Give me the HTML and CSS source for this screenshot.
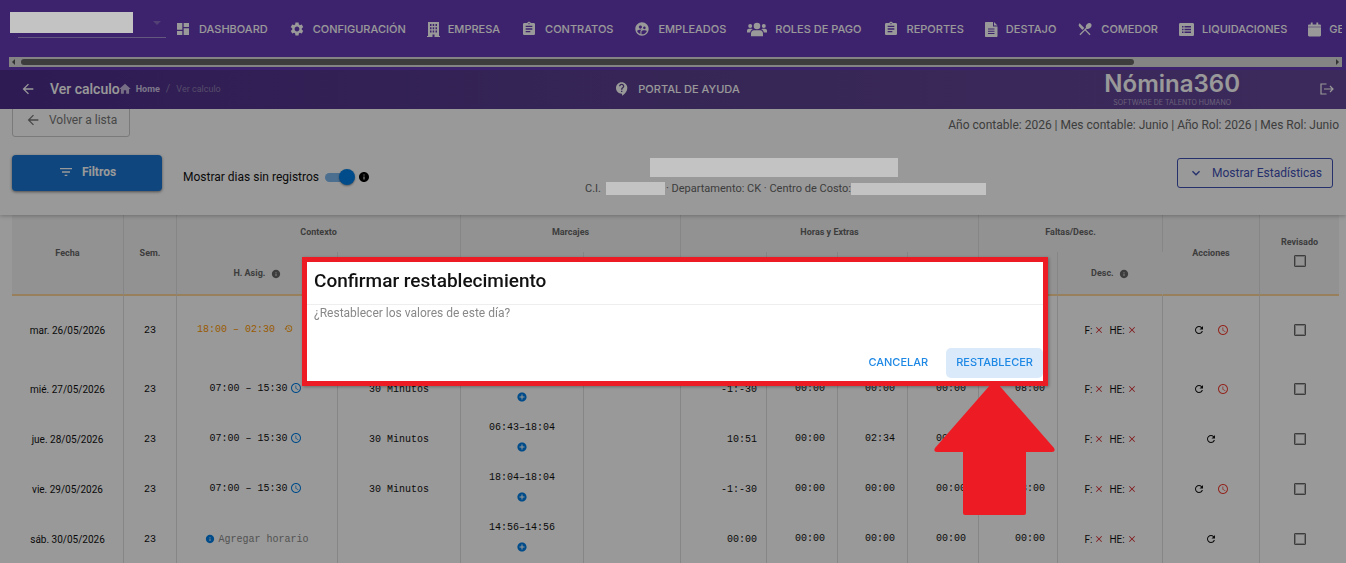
FILE: index.html
```html
<!DOCTYPE html>
<html lang="es">
<head>
    <meta charset="UTF-8">
    <meta name="viewport" content="width=device-width, initial-scale=1.0">
    <title>Ver calculo</title>
    <link rel="stylesheet" href="styles.css">
</head>
<body>
    <svg class="sprite" aria-hidden="true">
        <symbol id="i-dashboard" viewBox="0 0 24 24"><path d="M3 13h8V3H3v10zm0 8h8v-6H3v6zm10 0h8V11h-8v10zm0-18v6h8V3h-8z"/></symbol>
        <symbol id="i-settings" viewBox="0 0 24 24"><path d="M19.14 12.94c.04-.3.06-.61.06-.94 0-.32-.02-.64-.07-.94l2.03-1.58c.18-.14.23-.41.12-.61l-1.92-3.32c-.12-.22-.37-.29-.59-.22l-2.39.96c-.5-.38-1.03-.7-1.62-.94L14.4 2.81c-.04-.24-.24-.41-.48-.41h-3.84c-.24 0-.43.17-.47.41L9.25 5.35C8.66 5.59 8.12 5.92 7.63 6.29L5.24 5.33c-.22-.08-.47 0-.59.22L2.74 8.87c-.12.21-.08.47.12.61l2.03 1.58c-.05.3-.09.63-.09.94s.02.64.07.94l-2.03 1.58c-.18.14-.23.41-.12.61l1.92 3.32c.12.22.37.29.59.22l2.39-.96c.5.38 1.03.7 1.62.94l.36 2.54c.05.24.24.41.48.41h3.84c.24 0 .44-.17.47-.41l.36-2.54c.59-.24 1.13-.56 1.62-.94l2.39.96c.22.08.47 0 .59-.22l1.92-3.32c.12-.22.07-.47-.12-.61l-2.01-1.58zM12 15.6c-1.98 0-3.6-1.62-3.6-3.6s1.62-3.6 3.6-3.6 3.6 1.62 3.6 3.6-1.62 3.6-3.6 3.6z"/></symbol>
        <symbol id="i-building" viewBox="0 0 13 15"><path fill-rule="evenodd" d="M1 0h11v14h1v1H7.500v-2.500h-2V15H0v-1h1zM3 2v2h1.500V2zm2.700 0v2h1.500V2zm2.800 0v2H10V2zM3 5.200v2h1.500v-2zm2.700 0v2h1.500v-2zm2.800 0v2H10v-2zM3 8.500v2h1.500v-2zm2.700 0v2h1.500v-2zm2.800 0v2H10v-2z"/></symbol>
        <symbol id="i-clipboard" viewBox="0 0 24 24"><path d="M19 3h-4.180C14.400 1.840 13.300 1 12 1c-1.300 0-2.400.84-2.820 2H5c-1.100 0-2 .9-2 2v14c0 1.100.9 2 2 2h14c1.100 0 2-.9 2-2V5c0-1.100-.9-2-2-2zm-7 0c.55 0 1 .45 1 1s-.45 1-1 1-1-.45-1-1 .45-1 1-1zm2 14H7v-2h7v2zm3-4H7v-2h10v2zm0-4H7V7h10v2z"/></symbol>
        <symbol id="i-employees" viewBox="0 0 24 24"><path d="M11.990 2c-5.520 0-10 4.480-10 10s4.480 10 10 10 10-4.480 10-10-4.480-10-10-10zm3.610 6.340c1.070 0 1.930.86 1.930 1.930 0 1.070-.86 1.930-1.930 1.930-1.070 0-1.930-.86-1.930-1.930-.01-1.070.86-1.930 1.930-1.930zm-6-1.580c1.300 0 2.360 1.060 2.360 2.360 0 1.300-1.060 2.360-2.360 2.360s-2.360-1.060-2.360-2.360c0-1.310 1.050-2.360 2.360-2.360zm0 9.130v3.750c-2.400-.75-4.300-2.600-5.140-4.960 1.050-1.120 3.670-1.690 5.140-1.690.53 0 1.200.08 1.900.22-1.640.87-1.900 2.020-1.900 2.680zM11.990 20c-.27 0-.53-.01-.79-.04v-4.070c0-1.420 2.940-2.130 4.400-2.130 1.070 0 2.920.39 3.840 1.150-1.170 2.970-4.060 5.090-7.450 5.090z"/></symbol>
        <symbol id="i-users" viewBox="0 0 20 14"><circle cx="10" cy="3.500" r="3.300"/><circle cx="3.200" cy="3.500" r="2"/><circle cx="16.800" cy="3.500" r="2"/><path d="M4 13.800V11c0-2 1.300-3.300 3-3.300h6c1.700 0 3 1.300 3 3.300v2.800zM0 10V8.200c0-1.100.9-2 2-2h2.500c.5 0 1 .2 1.300.6C4.200 7.500 3.300 8.700 3.200 10zM20 10V8.200c0-1.100-.9-2-2-2h-2.500c-.5 0-1 .2-1.300.6 1.600.7 2.500 1.900 2.600 3.200z"/></symbol>
        <symbol id="i-file" viewBox="0 0 13 15"><path fill-rule="evenodd" d="M1 0h7v4.500h4.500V14c0 .6-.4 1-1 1H1c-.6 0-1-.4-1-1V1c0-.6.4-1 1-1zm2 6.500v1h6.500v-1zm0 2.300v1h6.500v-1zm0 2.300v1h6.500v-1zM9 0l3.500 3.600H9z"/></symbol>
        <symbol id="i-food" viewBox="0 0 24 24"><path d="M8.100 13.340l2.830-2.830L3.910 3.500a4.008 4.008 0 0 0 0 5.660l4.190 4.180zm6.780-1.810c1.530.71 3.680.21 5.270-1.380 1.910-1.910 2.280-4.650.81-6.120-1.460-1.460-4.200-1.100-6.120.81-1.590 1.590-2.090 3.740-1.380 5.270L3.700 19.870l1.410 1.410L12 14.410l6.880 6.880 1.410-1.410L13.410 13l1.470-1.470z"/></symbol>
        <symbol id="i-list" viewBox="0 0 15 13"><path fill-rule="evenodd" d="M1.300 0h12.400C14.400 0 15 .6 15 1.300v10.400c0 .7-.6 1.300-1.300 1.300H1.300C.6 13 0 12.400 0 11.700V1.300C0 .6.600 0 1.300 0zM3 3v1.400h1.500V3zm2.500 0v1.400H12V3zM3 5.800v1.400h1.500V5.800zm2.500 0v1.400H12V5.800zM3 8.600V10h1.500V8.600zm2.500 0V10H12V8.600z"/></symbol>
        <symbol id="i-calendar" viewBox="0 0 14 15"><path d="M3 0h2v2h4V0h2v2h1.700c.7 0 1.300.6 1.300 1.300V4.500H0V3.300C0 2.600.6 2 1.300 2H3zM0 5.200h14v8.500c0 .7-.6 1.300-1.300 1.300H1.300C.6 15 0 14.400 0 13.700z"/></symbol>
        <symbol id="i-support" viewBox="0 0 24 24"><path d="M11.500 2C6.810 2 3 5.810 3 10.500S6.810 19 11.500 19h.5v3c4.860-2.340 8-7 8-11.500C20 5.810 16.190 2 11.500 2zm1 14.500h-2v-2h2v2zm0-3.500h-2c0-3.250 3-3 3-5 0-1.100-.9-2-2-2s-2 .9-2 2h-2c0-2.210 1.790-4 4-4s4 1.790 4 4c0 2.500-3 2.750-3 5z"/></symbol>
        <symbol id="i-home" viewBox="0 0 24 24"><path d="M10 20v-6h4v6h5v-8h3L12 3 2 12h3v8z"/></symbol>
        <symbol id="i-back" viewBox="0 0 24 24"><path d="M20 11H7.830l5.590-5.590L12 4l-8 8 8 8 1.410-1.410L7.830 13H20v-2z"/></symbol>
        <symbol id="i-logout" viewBox="0 0 14 12"><path fill="none" stroke="currentColor" stroke-width="1.200" d="M6.500 1H1v10h5.500M4 6h9M10 3l3 3-3 3"/></symbol>
        <symbol id="i-filter" viewBox="0 0 24 24"><path d="M10 18h4v-2h-4v2zM3 6v2h18V6H3zm3 7h12v-2H6v2z"/></symbol>
        <symbol id="i-down" viewBox="0 0 24 24"><path d="M16.590 8.590 12 13.170 7.410 8.590 6 10l6 6 6-6z"/></symbol>
        <symbol id="i-caret" viewBox="0 0 8 4"><path d="M0 0h8L4 4z"/></symbol>
        <symbol id="i-info" viewBox="0 0 24 24"><path d="M12 2C6.480 2 2 6.480 2 12s4.480 10 10 10 10-4.480 10-10S17.520 2 12 2zm1 15h-2v-6h2v6zm0-8h-2V7h2v2z"/></symbol>
        <symbol id="i-add" viewBox="0 0 24 24"><path d="M12 1C5.900 1 1 5.900 1 12s4.900 11 11 11 11-4.900 11-11S18.100 1 12 1zm6 12.200h-4.800V18h-2.400v-4.800H6v-2.400h4.800V6h2.400v4.800H18v2.400z"/></symbol>
        <symbol id="i-clock" viewBox="0 0 24 24"><path d="M11.990 2C6.470 2 2 6.480 2 12s4.470 10 9.990 10C17.520 22 22 17.520 22 12S17.520 2 11.990 2zM12 20c-4.420 0-8-3.580-8-8s3.580-8 8-8 8 3.580 8 8-3.580 8-8 8zm.5-13H11v6l5.250 3.150.75-1.230-4.500-2.670z"/></symbol>
        <symbol id="i-history" viewBox="0 0 24 24"><path d="M13 3a9 9 0 0 0-9 9H1l3.890 3.890.07.14L9 12H6c0-3.870 3.130-7 7-7s7 3.130 7 7-3.130 7-7 7c-1.930 0-3.680-.79-4.940-2.060l-1.420 1.420A8.954 8.954 0 0 0 13 21a9 9 0 0 0 0-18zm-1 5v5l4.280 2.540.72-1.210-3.500-2.080V8H12z"/></symbol>
        <symbol id="i-refresh" viewBox="0 0 24 24"><path d="M17.650 6.350A7.958 7.958 0 0 0 12 4c-4.420 0-7.990 3.580-7.990 8s3.570 8 7.990 8c3.730 0 6.840-2.550 7.730-6h-2.080A5.990 5.990 0 0 1 12 18c-3.310 0-6-2.690-6-6s2.690-6 6-6c1.660 0 3.140.69 4.220 1.780L13 11h7V4l-2.350 2.350z"/></symbol>
        <symbol id="i-close" viewBox="0 0 24 24"><path d="M21 4.800 19.200 3 12 10.200 4.800 3 3 4.800 10.200 12 3 19.200 4.800 21 12 13.800 19.200 21 21 19.200 13.800 12z"/></symbol>
    </svg>

    <nav class="navbar">
        <div class="nav-row">
            <div class="company">
                <select aria-label="Empresa"><option></option></select>
                <svg class="caret"><use href="#i-caret"/></svg>
                <span class="mask mask-company"></span>
            </div>
            <a href="#"><svg class="icon"><use href="#i-dashboard"/></svg>DASHBOARD</a>
            <a href="#"><svg class="icon"><use href="#i-settings"/></svg>CONFIGURACIÓN</a>
            <a href="#"><svg class="icon-fa"><use href="#i-building"/></svg>EMPRESA</a>
            <a href="#"><svg class="icon"><use href="#i-clipboard"/></svg>CONTRATOS</a>
            <a href="#"><svg class="icon"><use href="#i-employees"/></svg>EMPLEADOS</a>
            <a href="#"><svg class="icon-fa icon-wide"><use href="#i-users"/></svg>ROLES DE PAGO</a>
            <a href="#"><svg class="icon"><use href="#i-clipboard"/></svg>REPORTES</a>
            <a href="#"><svg class="icon-fa"><use href="#i-file"/></svg>DESTAJO</a>
            <a href="#"><svg class="icon"><use href="#i-food"/></svg>COMEDOR</a>
            <a href="#"><svg class="icon-fa icon-list"><use href="#i-list"/></svg>LIQUIDACIONES</a>
            <a href="#"><svg class="icon-fa"><use href="#i-calendar"/></svg>GE</a>
        </div>
        <div class="scrollbar">
            <span class="arrow-left"></span>
            <div class="track"><div class="thumb"></div></div>
            <span class="arrow-right"></span>
        </div>
    </nav>

    <header class="header">
        <div class="header-left">
            <a href="#" aria-label="Regresar"><svg class="icon"><use href="#i-back"/></svg></a>
            <h1>Ver calculo</h1>
            <div class="breadcrumb">
                <svg class="icon"><use href="#i-home"/></svg>
                <a href="#">Home</a>
                <span class="slash">/</span>
                <span>Ver calculo</span>
            </div>
        </div>
        <a href="#" class="help"><svg class="icon"><use href="#i-support"/></svg>PORTAL DE AYUDA</a>
        <div class="header-right">
            <div class="logo">
                <span class="logo-name">Nómina360</span>
                <span class="logo-tag">SOFTWARE DE TALENTO HUMANO</span>
            </div>
            <a href="#" aria-label="Salir"><svg class="icon-logout"><use href="#i-logout"/></svg></a>
        </div>
    </header>

    <section class="toolbar">
        <div class="toolbar-top">
            <button class="btn-back"><svg class="icon"><use href="#i-back"/></svg>Volver a lista</button>
            <p class="period">Año contable: 2026 | Mes contable: Junio | Año Rol: 2026 | Mes Rol: Junio</p>
        </div>
        <div class="toolbar-row">
            <button class="btn-filter"><svg class="icon"><use href="#i-filter"/></svg>Filtros</button>
            <label class="toggle">Mostrar dias sin registros
                <input type="checkbox" class="switch" checked>
                <svg class="icon-info"><use href="#i-info"/></svg>
            </label>
            <div class="employee">
                <span class="mask mask-name"></span>
                <div class="employee-data">
                    <span>C.I.</span><span class="mask mask-id"></span><span>· Departamento: CK · Centro de Costo:</span><span class="mask mask-cost"></span>
                </div>
            </div>
            <button class="btn-stats"><svg class="icon"><use href="#i-down"/></svg>Mostrar Estadísticas</button>
        </div>
    </section>

    <main class="sheet">
        <table>
            <colgroup>
                <col class="w112"><col class="w53"><col class="w161"><col class="w123"><col class="w123"><col class="w97"><col class="w86">
                <col class="w71"><col class="w70"><col class="w71"><col class="w79"><col class="w105"><col class="w97"><col class="w79">
            </colgroup>
            <thead>
                <tr class="groups">
                    <th rowspan="2">Fecha</th>
                    <th rowspan="2">Sem.</th>
                    <th colspan="2">Contexto</th>
                    <th colspan="2">Marcajes</th>
                    <th colspan="4">Horas y Extras</th>
                    <th colspan="2">Faltas/Desc.</th>
                    <th rowspan="2">Acciones</th>
                    <th rowspan="2"><label class="check-all">Revisado <input type="checkbox" class="check"></label></th>
                </tr>
                <tr class="subs">
                    <th>H. Asig. <svg class="icon-th"><use href="#i-info"/></svg></th>
                    <th></th><th></th><th></th><th></th><th></th><th></th><th></th><th></th>
                    <th>Desc. <svg class="icon-th"><use href="#i-info"/></svg></th>
                </tr>
            </thead>
            <tbody>
                <tr class="tall">
                    <td class="date">mar. 26/05/2026</td><td>23</td>
                    <td class="changed">18:00 – 02:30 <svg class="icon-history"><use href="#i-history"/></svg></td>
                    <td></td><td></td><td></td><td></td><td></td><td></td><td></td><td></td>
                    <td><div class="desc">F: <svg><use href="#i-close"/></svg> HE: <svg><use href="#i-close"/></svg></div></td>
                    <td><div class="actions"><button aria-label="Recalcular"><svg class="icon-refresh"><use href="#i-refresh"/></svg></button><button aria-label="Restablecer día"><svg class="icon-reset"><use href="#i-clock"/></svg></button></div></td>
                    <td><input type="checkbox" class="check" aria-label="Revisado"></td>
                </tr>
                <tr>
                    <td class="date">mié. 27/05/2026</td><td>23</td>
                    <td><div class="shift">07:00 – 15:30<svg><use href="#i-clock"/></svg></div></td>
                    <td>30 Minutos</td>
                    <td><div class="marks"><span></span><button aria-label="Agregar marcaje"><svg><use href="#i-add"/></svg></button></div></td>
                    <td></td>
                    <td class="total">-1:-30</td><td class="num">00:00</td><td class="num">00:00</td><td class="num">00:00</td><td class="num">08:00</td>
                    <td><div class="desc">F: <svg><use href="#i-close"/></svg> HE: <svg><use href="#i-close"/></svg></div></td>
                    <td><div class="actions"><button aria-label="Recalcular"><svg class="icon-refresh"><use href="#i-refresh"/></svg></button><button aria-label="Restablecer día"><svg class="icon-reset"><use href="#i-clock"/></svg></button></div></td>
                    <td><input type="checkbox" class="check" aria-label="Revisado"></td>
                </tr>
                <tr>
                    <td class="date">jue. 28/05/2026</td><td>23</td>
                    <td><div class="shift">07:00 – 15:30<svg><use href="#i-clock"/></svg></div></td>
                    <td>30 Minutos</td>
                    <td><div class="marks"><span>06:43–18:04</span><button aria-label="Agregar marcaje"><svg><use href="#i-add"/></svg></button></div></td>
                    <td></td>
                    <td class="total">10:51</td><td class="num">00:00</td><td class="num">02:34</td><td class="num">00:00</td><td class="num"></td>
                    <td><div class="desc">F: <svg><use href="#i-close"/></svg> HE: <svg><use href="#i-close"/></svg></div></td>
                    <td><div class="actions"><button aria-label="Recalcular"><svg class="icon-refresh"><use href="#i-refresh"/></svg></button></div></td>
                    <td><input type="checkbox" class="check" aria-label="Revisado"></td>
                </tr>
                <tr>
                    <td class="date">vie. 29/05/2026</td><td>23</td>
                    <td><div class="shift">07:00 – 15:30<svg><use href="#i-clock"/></svg></div></td>
                    <td>30 Minutos</td>
                    <td><div class="marks"><span>18:04–18:04</span><button aria-label="Agregar marcaje"><svg><use href="#i-add"/></svg></button></div></td>
                    <td></td>
                    <td class="total">-1:-30</td><td class="num">00:00</td><td class="num">00:00</td><td class="num">00:00</td><td class="num">08:00</td>
                    <td><div class="desc">F: <svg><use href="#i-close"/></svg> HE: <svg><use href="#i-close"/></svg></div></td>
                    <td><div class="actions"><button aria-label="Recalcular"><svg class="icon-refresh"><use href="#i-refresh"/></svg></button><button aria-label="Restablecer día"><svg class="icon-reset"><use href="#i-clock"/></svg></button></div></td>
                    <td><input type="checkbox" class="check" aria-label="Revisado"></td>
                </tr>
                <tr>
                    <td class="date">sáb. 30/05/2026</td><td>23</td>
                    <td><a href="#" class="add-shift"><svg><use href="#i-info"/></svg>Agregar horario</a></td>
                    <td></td>
                    <td><div class="marks"><span>14:56–14:56</span><button aria-label="Agregar marcaje"><svg><use href="#i-add"/></svg></button></div></td>
                    <td></td>
                    <td class="total">00:00</td><td class="num">00:00</td><td class="num">00:00</td><td class="num">00:00</td><td class="num">00:00</td>
                    <td><div class="desc">F: <svg><use href="#i-close"/></svg> HE: <svg><use href="#i-close"/></svg></div></td>
                    <td><div class="actions"><button aria-label="Recalcular"><svg class="icon-refresh"><use href="#i-refresh"/></svg></button></div></td>
                    <td><input type="checkbox" class="check" aria-label="Revisado"></td>
                </tr>
            </tbody>
        </table>
    </main>

    <div class="overlay"></div>
    <div class="modal-wrap">
        <div class="modal" role="dialog" aria-labelledby="modal-title">
            <h2 id="modal-title">Confirmar restablecimiento</h2>
            <p>¿Restablecer los valores de este día?</p>
            <div class="modal-actions">
                <button>CANCELAR</button>
                <button class="primary">RESTABLECER</button>
            </div>
            <svg class="pointer" viewBox="0 0 121 132"><path d="M57 1q3.500-2 7 0l56 64q2 4-2 4H92v61q0 2-2 2H31q-2 0-2-2V69H3q-4 0-2-4z"/></svg>
        </div>
    </div>
</body>
</html>
```
FILE: styles.css
```css
* {
    box-sizing: border-box;
}
body, html {
    margin: 0;
    height: 100%;
    overflow: hidden;
    font-family: Roboto, Arial, sans-serif;
    font-size: 12px;
    background-color: #fff;
}
a {
    color: inherit;
    text-decoration: none;
}
button {
    font-family: inherit;
    cursor: pointer;
}
svg {
    fill: currentColor;
    flex-shrink: 0;
}
.sprite {
    display: none;
}
.icon {
    width: 16px;
    height: 16px;
}

/* top navigation */
.navbar {
    height: 70px;
    padding: 0 4px 0 9px;
    background-color: #673ab7;
    color: #fff;
}
.nav-row {
    display: flex;
    align-items: center;
    gap: 21px;
    height: 57px;
    padding-top: 1px;
    overflow: hidden;
}
.nav-row a {
    display: flex;
    align-items: center;
    gap: 8px;
    font-family: Inter, sans-serif;
    font-size: 11px;
    font-weight: 500;
    white-space: nowrap;
}
.icon-fa {
    width: 13px;
    height: 15px;
}
.icon-wide {
    width: 20px;
}
.icon-list {
    width: 15px;
}
.company {
    display: flex;
    align-items: center;
    flex-shrink: 0;
    width: 157px;
    height: 38px;
    margin-right: -12px;
    margin-top: -20px;
    padding-left: 9px;
    position: relative;
}
.company select {
    width: 100%;
    height: 38px;
    appearance: none;
    background: none;
    border: none;
    border-bottom: 1px solid #a893d3;
    color: #fff;
}
.caret {
    position: absolute;
    right: 5px;
    top: 21px;
    width: 8px;
    height: 4px;
    color: #8a6cc4;
}
.mask {
    background-color: #c3c3c3;
    position: relative;
    z-index: 20;
}
.mask-company {
    position: absolute;
    left: 1px;
    top: 12px;
    width: 123px;
    height: 21px;
}
.scrollbar {
    display: flex;
    align-items: center;
    height: 10px;
    padding: 0 3px;
    background-color: #dcdcdc;
}
.track {
    flex: 1;
    margin: 0 6px;
}
.thumb {
    width: 85%;
    height: 6px;
    border-radius: 3px;
    background-color: #666;
}
.arrow-left, .arrow-right {
    border: 3px solid transparent;
}
.arrow-left {
    border-left: none;
    border-right-color: #555;
}
.arrow-right {
    border-right: none;
    border-left-color: #555;
}

/* page header */
.header {
    display: grid;
    grid-template-columns: 1fr auto 1fr;
    align-items: center;
    height: 39px;
    padding: 0 12px 2px 20px;
    background: linear-gradient(90deg, #4e2d8d, #5b408f 50%, #644799);
    color: #fff;
    position: relative;
    z-index: 2;
}
.header-left, .header-right, .breadcrumb, .help {
    display: flex;
    align-items: center;
}
.header-left .icon {
    display: block;
}
.header h1 {
    margin: 0 0 0 14px;
    font-size: 14px;
    font-weight: 500;
}
.breadcrumb {
    font-size: 9px;
    color: #8f7fb0;
}
.breadcrumb .icon {
    width: 14px;
    margin-left: -2px;
    color: #c5b8dd;
}
.breadcrumb a {
    margin-left: 4px;
    font-weight: 700;
    color: #d0c6e4;
}
.slash {
    margin: 0 6px;
    font-size: 11px;
}
.help {
    gap: 8px;
    font-family: Inter, sans-serif;
    font-size: 11px;
    font-weight: 500;
}
.header-right {
    justify-content: flex-end;
    gap: 80px;
}
.logo {
    display: flex;
    flex-direction: column;
    align-items: center;
    gap: 3px;
    font-family: Inter, sans-serif;
}
.logo-name {
    font-size: 24px;
    font-weight: 600;
    line-height: 24px;
}
.logo-tag {
    font-size: 7px;
    line-height: 7px;
    color: #b3a3cc;
}
.icon-logout {
    display: block;
    width: 14px;
    height: 12px;
}

/* filters */
.toolbar {
    height: 106px;
    padding: 0 7px 0 12px;
    background-color: #fff;
    box-shadow: 0 1px 4px rgba(0,0,0,0.25);
    position: relative;
}
.toolbar-top {
    display: flex;
    justify-content: space-between;
    align-items: flex-end;
    height: 28px;
}
.btn-back {
    display: flex;
    align-items: center;
    gap: 8px;
    height: 34px;
    padding: 0 12px;
    background: none;
    border: 1px solid #ccc;
    border-radius: 3px;
    color: #777;
    font-size: 12px;
}
.period {
    margin: 0;
    line-height: 24px;
    color: #666;
}
.toolbar-row {
    display: flex;
    align-items: center;
    height: 36px;
    margin-top: 18px;
}
.btn-filter {
    display: flex;
    align-items: center;
    justify-content: center;
    gap: 8px;
    width: 150px;
    height: 36px;
    padding-bottom: 4px;
    background-color: #1976d2;
    border: none;
    border-radius: 4px;
    box-shadow: 0 1px 3px rgba(0,0,0,0.5);
    color: #fff;
    font-size: 12px;
    font-weight: 700;
}
.toggle {
    display: flex;
    align-items: center;
    margin: 8px 0 0 21px;
    color: #111;
}
.switch {
    display: flex;
    align-items: center;
    justify-content: flex-end;
    appearance: none;
    width: 26px;
    height: 9px;
    margin: 0 4px 0 6px;
    border-radius: 5px;
    background-color: #7fb9ee;
}
.switch::before {
    content: "";
    flex-shrink: 0;
    width: 16px;
    height: 16px;
    margin-right: -4px;
    border-radius: 50%;
    background-color: #007fe6;
    box-shadow: 0 1px 2px rgba(0,0,0,0.4);
}
.icon-info {
    width: 12px;
    height: 12px;
    margin-left: 3px;
    color: #000;
}
.employee {
    flex: 1;
    display: flex;
    flex-direction: column;
    align-items: center;
    gap: 5px;
    padding: 7px 0 0 24px;
}
.mask-name {
    width: 248px;
    height: 19px;
    margin-right: 24px;
}
.employee-data {
    display: flex;
    align-items: center;
    font-size: 11px;
    color: #666;
}
.mask-id {
    width: 59px;
    height: 13px;
    margin: 0 1px 0 5px;
}
.mask-cost {
    width: 135px;
    height: 12px;
}
.btn-stats {
    display: flex;
    align-items: center;
    justify-content: center;
    gap: 8px;
    height: 30px;
    width: 156px;
    margin-right: 6px;
    padding: 0;
    background: none;
    border: 1px solid #3f51b5;
    border-radius: 3px;
    color: #3f51b5;
    font-size: 12px;
}

/* calculation table */
.sheet {
    padding: 0 7px 0 12px;
}
table {
    width: 100%;
    table-layout: fixed;
    border-collapse: separate;
    border-spacing: 0;
}
.w53 { width: 53px; }
.w70 { width: 70px; }
.w71 { width: 71px; }
.w79 { width: 79px; }
.w86 { width: 86px; }
.w97 { width: 97px; }
.w105 { width: 105px; }
.w112 { width: 112px; }
.w123 { width: 123px; }
.w161 { width: 161px; }
th {
    padding: 0;
    background-color: #f4f4f4;
    border-right: 1px solid #e0e0e0;
    color: #666;
    font-size: 9px;
    font-weight: 700;
}
td {
    height: 50px;
    padding: 0;
    border-right: 1px solid #e0e0e0;
    text-align: center;
    font-family: "Courier New", "Liberation Mono", monospace;
    font-size: 10px;
    color: #111;
}
th:last-child, td:last-child {
    border-right: none;
}
.groups th {
    height: 37px;
    padding-bottom: 4px;
}
.subs th {
    height: 44px;
    border-bottom: 2px solid #ffd699;
}
.subs th:last-child {
    border-right: 1px solid #f4f4f4;
}
.groups th[rowspan] {
    border-bottom: 2px solid #ffd699;
}
.icon-th {
    width: 10px;
    height: 10px;
    margin-left: 3px;
    vertical-align: -3px;
}
.check-all {
    display: flex;
    flex-direction: column;
    align-items: center;
    gap: 8px;
    padding-bottom: 2px;
}
.check {
    appearance: none;
    display: block;
    width: 12px;
    height: 12px;
    margin: 0 auto;
    border: 1px solid #666;
    outline: 1px solid #bbb;
    outline-offset: -2px;
    border-radius: 1px;
}
.tall td {
    height: 68px;
}
td.date {
    font-family: Roboto, sans-serif;
    font-size: 10px;
}
td.changed {
    padding: 0 24px 2px 0;
    color: #ff9800;
}
.icon-history {
    width: 9px;
    height: 9px;
    margin-left: 3px;
    vertical-align: -1px;
}
.shift {
    display: flex;
    align-items: center;
    justify-content: center;
    gap: 2px;
    padding: 0 3px 2px 0;
}
.shift svg {
    width: 12px;
    height: 12px;
    color: #007fe6;
}
.marks {
    display: flex;
    flex-direction: column;
    align-items: center;
    gap: 7px;
    padding-bottom: 5px;
}
.marks span {
    height: 14px;
    line-height: 14px;
}
.marks button, .actions button {
    display: flex;
    padding: 0;
    background: none;
    border: none;
    color: #111;
}
.marks svg {
    width: 10px;
    height: 10px;
    color: #007fe6;
}
.num {
    padding-right: 12px;
    padding-bottom: 2px;
    text-align: right;
}
.total {
    padding-right: 9px;
    text-align: right;
}
.desc {
    display: flex;
    align-items: center;
    justify-content: center;
    gap: 3px;
    font-family: Roboto, sans-serif;
}
.desc svg {
    width: 8px;
    height: 8px;
    color: #d9252a;
}
.desc svg:first-child {
    margin-right: 3px;
}
.actions {
    display: flex;
    align-items: center;
    justify-content: center;
    gap: 12px;
}
.icon-refresh {
    width: 12px;
    height: 12px;
}
.actions .icon-reset {
    width: 12px;
    height: 12px;
    color: #f44336;
}
.add-shift {
    display: flex;
    align-items: center;
    justify-content: center;
    gap: 3px;
    color: #8a8a8a;
}
.add-shift svg {
    width: 10px;
    height: 10px;
    color: #007fe6;
}

/* confirmation dialog */
.overlay {
    position: fixed;
    inset: 0;
    z-index: 10;
    background-color: rgba(0,0,0,0.4);
}
.modal-wrap {
    position: fixed;
    inset: 0;
    z-index: 30;
    display: flex;
    justify-content: center;
    align-items: flex-start;
    padding: 257px 0 0 4px;
}
.modal {
    position: relative;
    width: 746px;
    background-color: #fff;
    border: 5px solid #ed1c24;
    box-shadow: 1px 1px 3px rgba(0,0,0,0.3);
}
.modal h2 {
    margin: 0;
    padding: 0 7px 5px;
    border-bottom: 1px solid #eee;
    font-size: 19px;
    font-weight: 500;
    line-height: 37px;
    color: #111;
}
.modal p {
    margin: 0;
    padding: 0 7px;
    line-height: 16px;
    color: #888;
}
.modal-actions {
    display: flex;
    justify-content: flex-end;
    gap: 8px;
    padding: 27px 0 3px;
}
.modal-actions button {
    height: 30px;
    padding: 0 10px 2px;
    background: none;
    border: none;
    border-radius: 5px;
    font-family: Inter, sans-serif;
    font-size: 11px;
    font-weight: 500;
    color: #1e88e5;
}
.modal-actions .primary {
    background-color: #dbeafa;
}
.pointer {
    position: absolute;
    right: -12px;
    top: calc(100% + 2px);
    width: 121px;
    height: 132px;
    color: #ed1c24;
}
```
